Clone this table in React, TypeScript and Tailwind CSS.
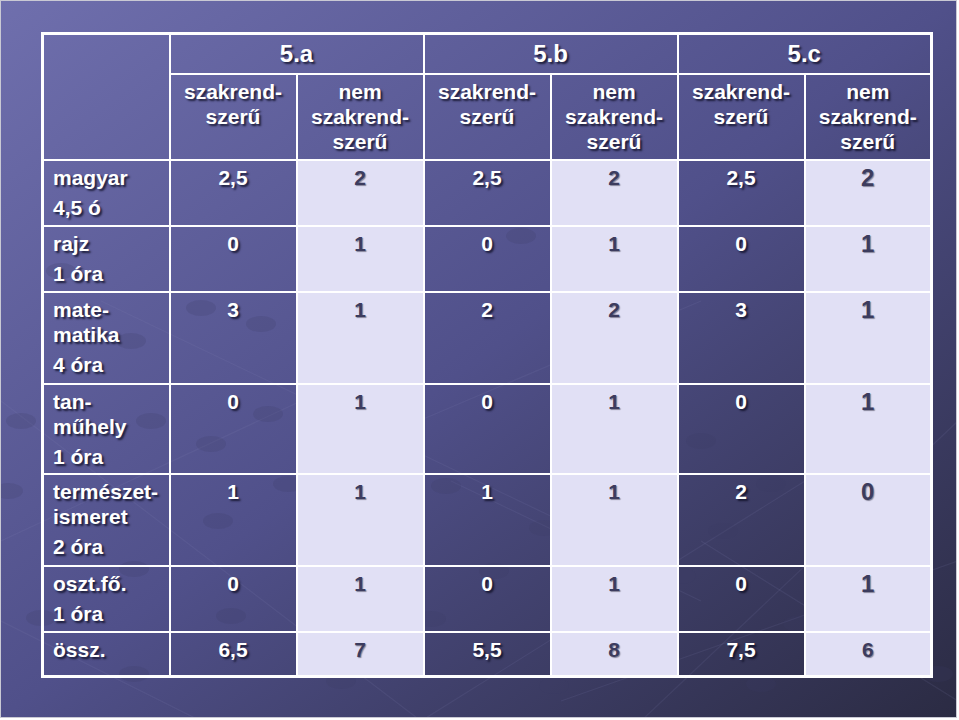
import React from "react";

const rows = [
  { name: ["magyar"], hours: "4,5 ó", h: "h-[66px]", values: ["2,5", "2", "2,5", "2", "2,5", "2"] },
  { name: ["rajz"], hours: "1 óra", h: "h-[66px]", values: ["0", "1", "0", "1", "0", "1"] },
  { name: ["mate-", "matika"], hours: "4 óra", h: "h-[92px]", values: ["3", "1", "2", "2", "3", "1"] },
  { name: ["tan-", "műhely"], hours: "1 óra", h: "h-[90px]", values: ["0", "1", "0", "1", "0", "1"] },
  { name: ["természet-", "ismeret"], hours: "2 óra", h: "h-[92px]", values: ["1", "1", "1", "1", "2", "0"] },
  { name: ["oszt.fő."], hours: "1 óra", h: "h-[66px]", values: ["0", "1", "0", "1", "0", "1"] },
];
const totals = ["6,5", "7", "5,5", "8", "7,5", "6"];

const lightText = "text-white [text-shadow:2px_2px_2px_rgba(10,10,30,0.75)]";
const darkText = "text-[#3c3c5e] [text-shadow:1px_1px_1px_rgba(20,20,40,0.45)]";

// faint dots and lines of the slide template
const dots = [
  [7, 490], [287, 483], [217, 520], [133, 568], [230, 615], [40, 617], [133, 673],
  [20, 420], [150, 420], [267, 413], [210, 443], [200, 307], [260, 323],
  [445, 485], [543, 527], [493, 570], [430, 618], [340, 680], [553, 685],
  [770, 483], [722, 530], [937, 673], [760, 683], [680, 575], [797, 623],
  [130, 340], [60, 270], [590, 205], [520, 235], [700, 440], [880, 390],
];
const lines = [
  [0, 400, 420, 720], [100, 300, 560, 520], [300, 470, 700, 300], [640, 720, 957, 420],
  [420, 720, 820, 470], [0, 540, 300, 400], [560, 700, 957, 560], [700, 540, 957, 700],
  [200, 720, 0, 620], [450, 480, 700, 600],
];

function Cell({ dark, big, children, className = "" }: { dark: boolean; big?: boolean; children: React.ReactNode; className?: string }) {
  return (
    <td
      className={`border-2 border-white align-top text-center font-bold leading-[25px] ${
        big ? "text-[24px]" : "text-[21px]"
      } ${dark ? lightText : "bg-[#e1e0f5] " + darkText} ${className}`}
    >
      {children}
    </td>
  );
}

export default function App() {
  return (
    <div className="w-[959px] h-[720px] bg-white font-['Liberation_Sans',Arial,sans-serif]">
      <div className="relative w-[957px] h-[718px] border border-[#c9c9d4] bg-linear-to-br from-[#6f6fad] via-[#50508a] to-[#2b2b43] overflow-hidden">
        <svg className="absolute inset-0" width="957" height="718">
          {lines.map(([x1, y1, x2, y2], i) => (
            <line key={i} x1={x1} y1={y1} x2={x2} y2={y2} stroke="#8888bb" strokeOpacity="0.12" strokeWidth="1.2" />
          ))}
          {dots.map(([cx, cy], i) => (
            <ellipse key={i} cx={cx} cy={cy} rx="15" ry="8" fill="#3a3a66" fillOpacity="0.2" />
          ))}
        </svg>
        <div className="relative pl-[40px] pt-[31px]">
          <table className="table-fixed border-collapse border-[3px] border-white w-[889px]">
            <colgroup>
              <col className="w-[127px]" />
              <col className="w-[127px]" />
              <col className="w-[127px]" />
              <col className="w-[127px]" />
              <col className="w-[127px]" />
              <col className="w-[127px]" />
              <col className="w-[127px]" />
            </colgroup>
            <tbody>
              <tr className="h-[40px]">
                <td rowSpan={2} className="border-2 border-white" />
                {["5.a", "5.b", "5.c"].map((c) => (
                  <td key={c} colSpan={2} className={`border-2 border-white text-center align-middle text-[24px] font-bold ${lightText}`}>
                    {c}
                  </td>
                ))}
              </tr>
              <tr className="h-[86px]">
                {[0, 1, 2].map((i) => (
                  <React.Fragment key={i}>
                    <td className={`border-2 border-white align-top pt-[4px] text-center text-[21px] font-bold leading-[25px] ${lightText}`}>
                      <div>szakrend-</div>
                      <div>szerű</div>
                    </td>
                    <td className={`border-2 border-white align-top pt-[4px] text-center text-[21px] font-bold leading-[25px] ${lightText}`}>
                      <div>nem</div>
                      <div>szakrend-</div>
                      <div>szerű</div>
                    </td>
                  </React.Fragment>
                ))}
              </tr>
              {rows.map((r) => (
                <tr key={r.hours + r.name[0]} className={r.h}>
                  <td className={`border-2 border-white align-top pt-[4px] pl-[9px] text-left text-[21px] font-bold leading-[25px] ${lightText}`}>
                    {r.name.map((n) => (
                      <div key={n}>{n}</div>
                    ))}
                    <div className="mt-[5px]">{r.hours}</div>
                  </td>
                  {r.values.map((v, i) => (
                    <Cell key={i} dark={i % 2 === 0} big={i === 5} className="pt-[4px]">
                      {v}
                    </Cell>
                  ))}
                </tr>
              ))}
              <tr className="h-[45px]">
                <td className={`border-2 border-white align-top pt-[4px] pl-[9px] text-left text-[21px] font-bold leading-[25px] ${lightText}`}>
                  össz.
                </td>
                {totals.map((v, i) => (
                  <Cell key={i} dark={i % 2 === 0} className="pt-[4px]">
                    {v}
                  </Cell>
                ))}
              </tr>
            </tbody>
          </table>
        </div>
      </div>
    </div>
  );
}
